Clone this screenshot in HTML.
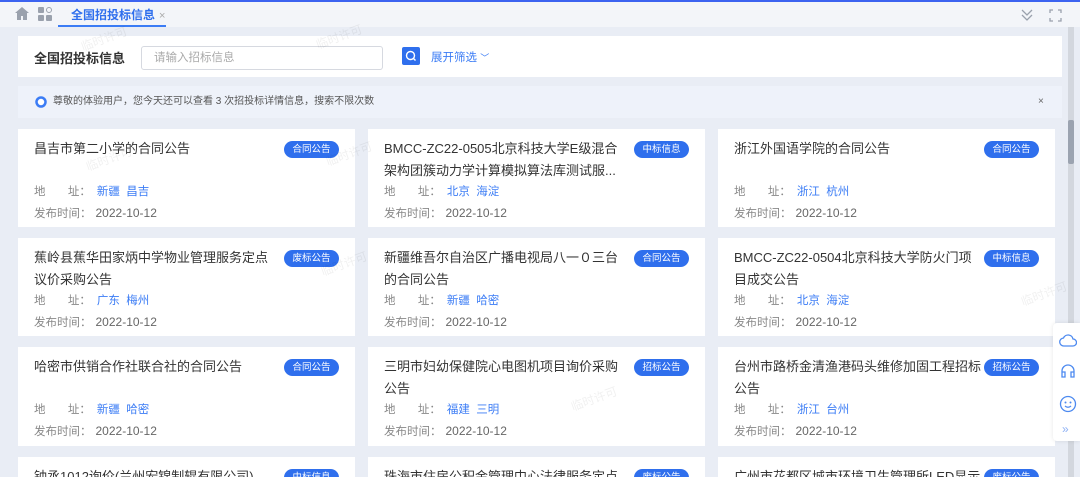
<!DOCTYPE html>
<html><head><meta charset="utf-8"><style>
*{box-sizing:border-box;margin:0;padding:0}
html,body{width:1080px;height:477px;overflow:hidden}
body{background:#e9edf5;font-family:"Liberation Sans","Noto Sans CJK SC",sans-serif;position:relative;color:#333}
.topline{position:absolute;left:0;top:0;width:1080px;height:2px;background:#3c63f0}
.tabbar{position:absolute;left:0;top:2px;width:1080px;height:25px;background:#f3f5f9}
.tab{position:absolute;left:58px;top:2px;width:108px;height:23px;border-bottom:2px solid #3b7cf5;color:#2f6fed;font-size:12px;font-weight:bold;padding-left:13px;line-height:22px}
.tab span{color:#aaa;font-weight:normal;font-size:11px;margin-left:4px}
.search{position:absolute;left:18px;top:36px;width:1044px;height:41px;background:#fff}
.notice{position:absolute;left:18px;top:86px;width:1044px;height:32px;background:#eef2fa;font-size:10px;color:#555;line-height:32px;padding-left:35px}
.card{position:absolute;width:337px;height:98px;background:#fff;overflow:hidden}
.t{position:absolute;left:16px;top:9px;width:260px;font-size:13px;line-height:22px;color:#333;white-space:nowrap}
.b{position:absolute;left:266px;top:12px;width:55px;height:17px;border-radius:9px;background:#2f6fed;color:#fff;font-size:9.5px;text-align:center;line-height:17px}
.a{position:absolute;left:16px;top:54px;font-size:11.5px;color:#888}
.a i{font-style:normal;color:#3b7cf5;margin-left:6px}
.d{position:absolute;left:16px;top:76px;font-size:11.5px;color:#888}
.d i{font-style:normal;color:#666;margin-left:4px;font-size:12px}
.wm{position:absolute;color:rgba(0,0,0,.06);font-size:12px;transform:rotate(-20deg)}
</style></head><body>
<div class="topline"></div>
<div class="tabbar">
<svg style="position:absolute;left:15px;top:5px" width="14" height="13" viewBox="0 0 14 13"><path d="M7 0L0 6h2v7h4V9h2v4h4V6h2z" fill="#9aa1ad"/></svg>
<svg style="position:absolute;left:38px;top:5px" width="14" height="14" viewBox="0 0 14 14"><rect x="0" y="0" width="6" height="6" rx="1" fill="#9aa1ad"/><rect x="0" y="8" width="6" height="6" rx="1" fill="#9aa1ad"/><rect x="8" y="8" width="6" height="6" rx="1" fill="#9aa1ad"/><circle cx="11" cy="3" r="2.5" fill="none" stroke="#9aa1ad"/></svg>
<div class="tab">全国招投标信息<span>×</span></div>
<svg style="position:absolute;left:1020px;top:6px" width="14" height="14" viewBox="0 0 14 14"><path d="M2 2l5 5 5-5M2 7l5 5 5-5" stroke="#9aa1ad" fill="none" stroke-width="1.3"/></svg>
<svg style="position:absolute;left:1049px;top:7px" width="13" height="13" viewBox="0 0 13 13"><path d="M1 4V1h3M9 1h3v3M12 9v3H9M4 12H1V9" stroke="#9aa1ad" fill="none" stroke-width="1.3"/></svg>
</div>
<div class="search">
<div style="position:absolute;left:16px;top:12px;font-size:13px;font-weight:bold;color:#333">全国招投标信息</div>
<div style="position:absolute;left:123px;top:10px;width:242px;height:24px;border:1px solid #d6d9e0;border-radius:3px;font-size:11.5px;color:#aaa;line-height:22px;padding-left:12px">请输入招标信息</div>
<div style="position:absolute;left:384px;top:11px;width:18px;height:18px;background:#2f6fed;border-radius:2px"><svg width="18" height="18" viewBox="0 0 18 18"><circle cx="8.5" cy="8.5" r="4" stroke="#fff" fill="none" stroke-width="1.4"/><path d="M11.5 11.5l2 2" stroke="#fff" stroke-width="1.4"/></svg></div>
<div style="position:absolute;left:413px;top:13px;font-size:11.5px;color:#3b7cf5">展开筛选 <span style="font-size:9px">﹀</span></div>
</div>
<div class="notice"><svg style="position:absolute;left:17px;top:10px" width="12" height="12"><circle cx="6" cy="6" r="4.5" stroke="#3b7cf5" stroke-width="2.5" fill="#fff"/></svg>尊敬的体验用户，您今天还可以查看 3 次招投标详情信息，搜索不限次数<span style="position:absolute;left:1020px;top:0;color:#666">×</span></div>

<div class="card" style="left:18px;top:129px"><div class="t">昌吉市第二小学的合同公告</div><div class="b">合同公告</div><div class="a">地&nbsp;&nbsp;&nbsp;&nbsp;&nbsp;&nbsp;&nbsp;址：<i>新疆&nbsp;&nbsp;昌吉</i></div><div class="d">发布时间：<i>2022-10-12</i></div></div>
<div class="card" style="left:368px;top:129px"><div class="t">BMCC-ZC22-0505北京科技大学E级混合<br>架构团簇动力学计算模拟算法库测试服...</div><div class="b">中标信息</div><div class="a">地&nbsp;&nbsp;&nbsp;&nbsp;&nbsp;&nbsp;&nbsp;址：<i>北京&nbsp;&nbsp;海淀</i></div><div class="d">发布时间：<i>2022-10-12</i></div></div>
<div class="card" style="left:718px;top:129px"><div class="t">浙江外国语学院的合同公告</div><div class="b">合同公告</div><div class="a">地&nbsp;&nbsp;&nbsp;&nbsp;&nbsp;&nbsp;&nbsp;址：<i>浙江&nbsp;&nbsp;杭州</i></div><div class="d">发布时间：<i>2022-10-12</i></div></div>

<div class="card" style="left:18px;top:238px"><div class="t">蕉岭县蕉华田家炳中学物业管理服务定点<br>议价采购公告</div><div class="b">废标公告</div><div class="a">地&nbsp;&nbsp;&nbsp;&nbsp;&nbsp;&nbsp;&nbsp;址：<i>广东&nbsp;&nbsp;梅州</i></div><div class="d">发布时间：<i>2022-10-12</i></div></div>
<div class="card" style="left:368px;top:238px"><div class="t">新疆维吾尔自治区广播电视局八一０三台<br>的合同公告</div><div class="b">合同公告</div><div class="a">地&nbsp;&nbsp;&nbsp;&nbsp;&nbsp;&nbsp;&nbsp;址：<i>新疆&nbsp;&nbsp;哈密</i></div><div class="d">发布时间：<i>2022-10-12</i></div></div>
<div class="card" style="left:718px;top:238px"><div class="t">BMCC-ZC22-0504北京科技大学防火门项<br>目成交公告</div><div class="b">中标信息</div><div class="a">地&nbsp;&nbsp;&nbsp;&nbsp;&nbsp;&nbsp;&nbsp;址：<i>北京&nbsp;&nbsp;海淀</i></div><div class="d">发布时间：<i>2022-10-12</i></div></div>

<div class="card" style="left:18px;top:347px;height:99px"><div class="t">哈密市供销合作社联合社的合同公告</div><div class="b">合同公告</div><div class="a">地&nbsp;&nbsp;&nbsp;&nbsp;&nbsp;&nbsp;&nbsp;址：<i>新疆&nbsp;&nbsp;哈密</i></div><div class="d">发布时间：<i>2022-10-12</i></div></div>
<div class="card" style="left:368px;top:347px;height:99px"><div class="t">三明市妇幼保健院心电图机项目询价采购<br>公告</div><div class="b">招标公告</div><div class="a">地&nbsp;&nbsp;&nbsp;&nbsp;&nbsp;&nbsp;&nbsp;址：<i>福建&nbsp;&nbsp;三明</i></div><div class="d">发布时间：<i>2022-10-12</i></div></div>
<div class="card" style="left:718px;top:347px;height:99px"><div class="t">台州市路桥金清渔港码头维修加固工程招标<br>公告</div><div class="b">招标公告</div><div class="a">地&nbsp;&nbsp;&nbsp;&nbsp;&nbsp;&nbsp;&nbsp;址：<i>浙江&nbsp;&nbsp;台州</i></div><div class="d">发布时间：<i>2022-10-12</i></div></div>

<div class="card" style="left:18px;top:457px;height:20px"><div class="t">钟丞1012询价(兰州宏锦制辊有限公司)</div><div class="b">中标信息</div></div>
<div class="card" style="left:368px;top:457px;height:20px"><div class="t">珠海市住房公积金管理中心法律服务定点</div><div class="b">废标公告</div></div>
<div class="card" style="left:718px;top:457px;height:20px"><div class="t">广州市花都区城市环境卫生管理所LED显示</div><div class="b">废标公告</div></div>

<div style="position:absolute;left:1068px;top:27px;width:6px;height:450px;background:#d3d7de"></div>
<div style="position:absolute;left:1068px;top:120px;width:6px;height:44px;background:#9ba3b0;border-radius:2px"></div>
<div style="position:absolute;left:1053px;top:323px;width:27px;height:118px;background:#fff;border-radius:4px 0 0 4px;box-shadow:0 0 4px rgba(0,0,0,.1)">
<svg style="position:absolute;left:6px;top:10px" width="18" height="14" viewBox="0 0 18 14"><path d="M5 13h9a3.5 3.5 0 0 0 0-7 5 5 0 0 0-9.5-1A4 4 0 0 0 5 13z" stroke="#4d8af0" fill="none" stroke-width="1.3"/></svg>
<svg style="position:absolute;left:7px;top:40px" width="16" height="16" viewBox="0 0 16 16"><path d="M2 11V8a6 6 0 0 1 12 0v3M2 9h3v5H2zM11 9h3v5h-3z" stroke="#4d8af0" fill="none" stroke-width="1.3"/></svg>
<svg style="position:absolute;left:6px;top:72px" width="18" height="18" viewBox="0 0 18 18"><circle cx="9" cy="9" r="7.5" stroke="#4d8af0" fill="none" stroke-width="1.3"/><circle cx="6.5" cy="7.5" r="1" fill="#4d8af0"/><circle cx="11.5" cy="7.5" r="1" fill="#4d8af0"/><path d="M6 11q3 2.5 6 0" stroke="#4d8af0" fill="none" stroke-width="1.2"/></svg>
<div style="position:absolute;left:9px;top:99px;color:#8fb2f5;font-size:12px">»</div>
</div>
<div class="wm" style="left:80px;top:30px">临时许可</div><div class="wm" style="left:315px;top:28px">临时许可</div><div class="wm" style="left:85px;top:150px">临时许可</div><div class="wm" style="left:325px;top:145px">临时许可</div><div class="wm" style="left:320px;top:255px">临时许可</div><div class="wm" style="left:570px;top:390px">临时许可</div><div class="wm" style="left:1020px;top:285px">临时许可</div>
</body></html>
